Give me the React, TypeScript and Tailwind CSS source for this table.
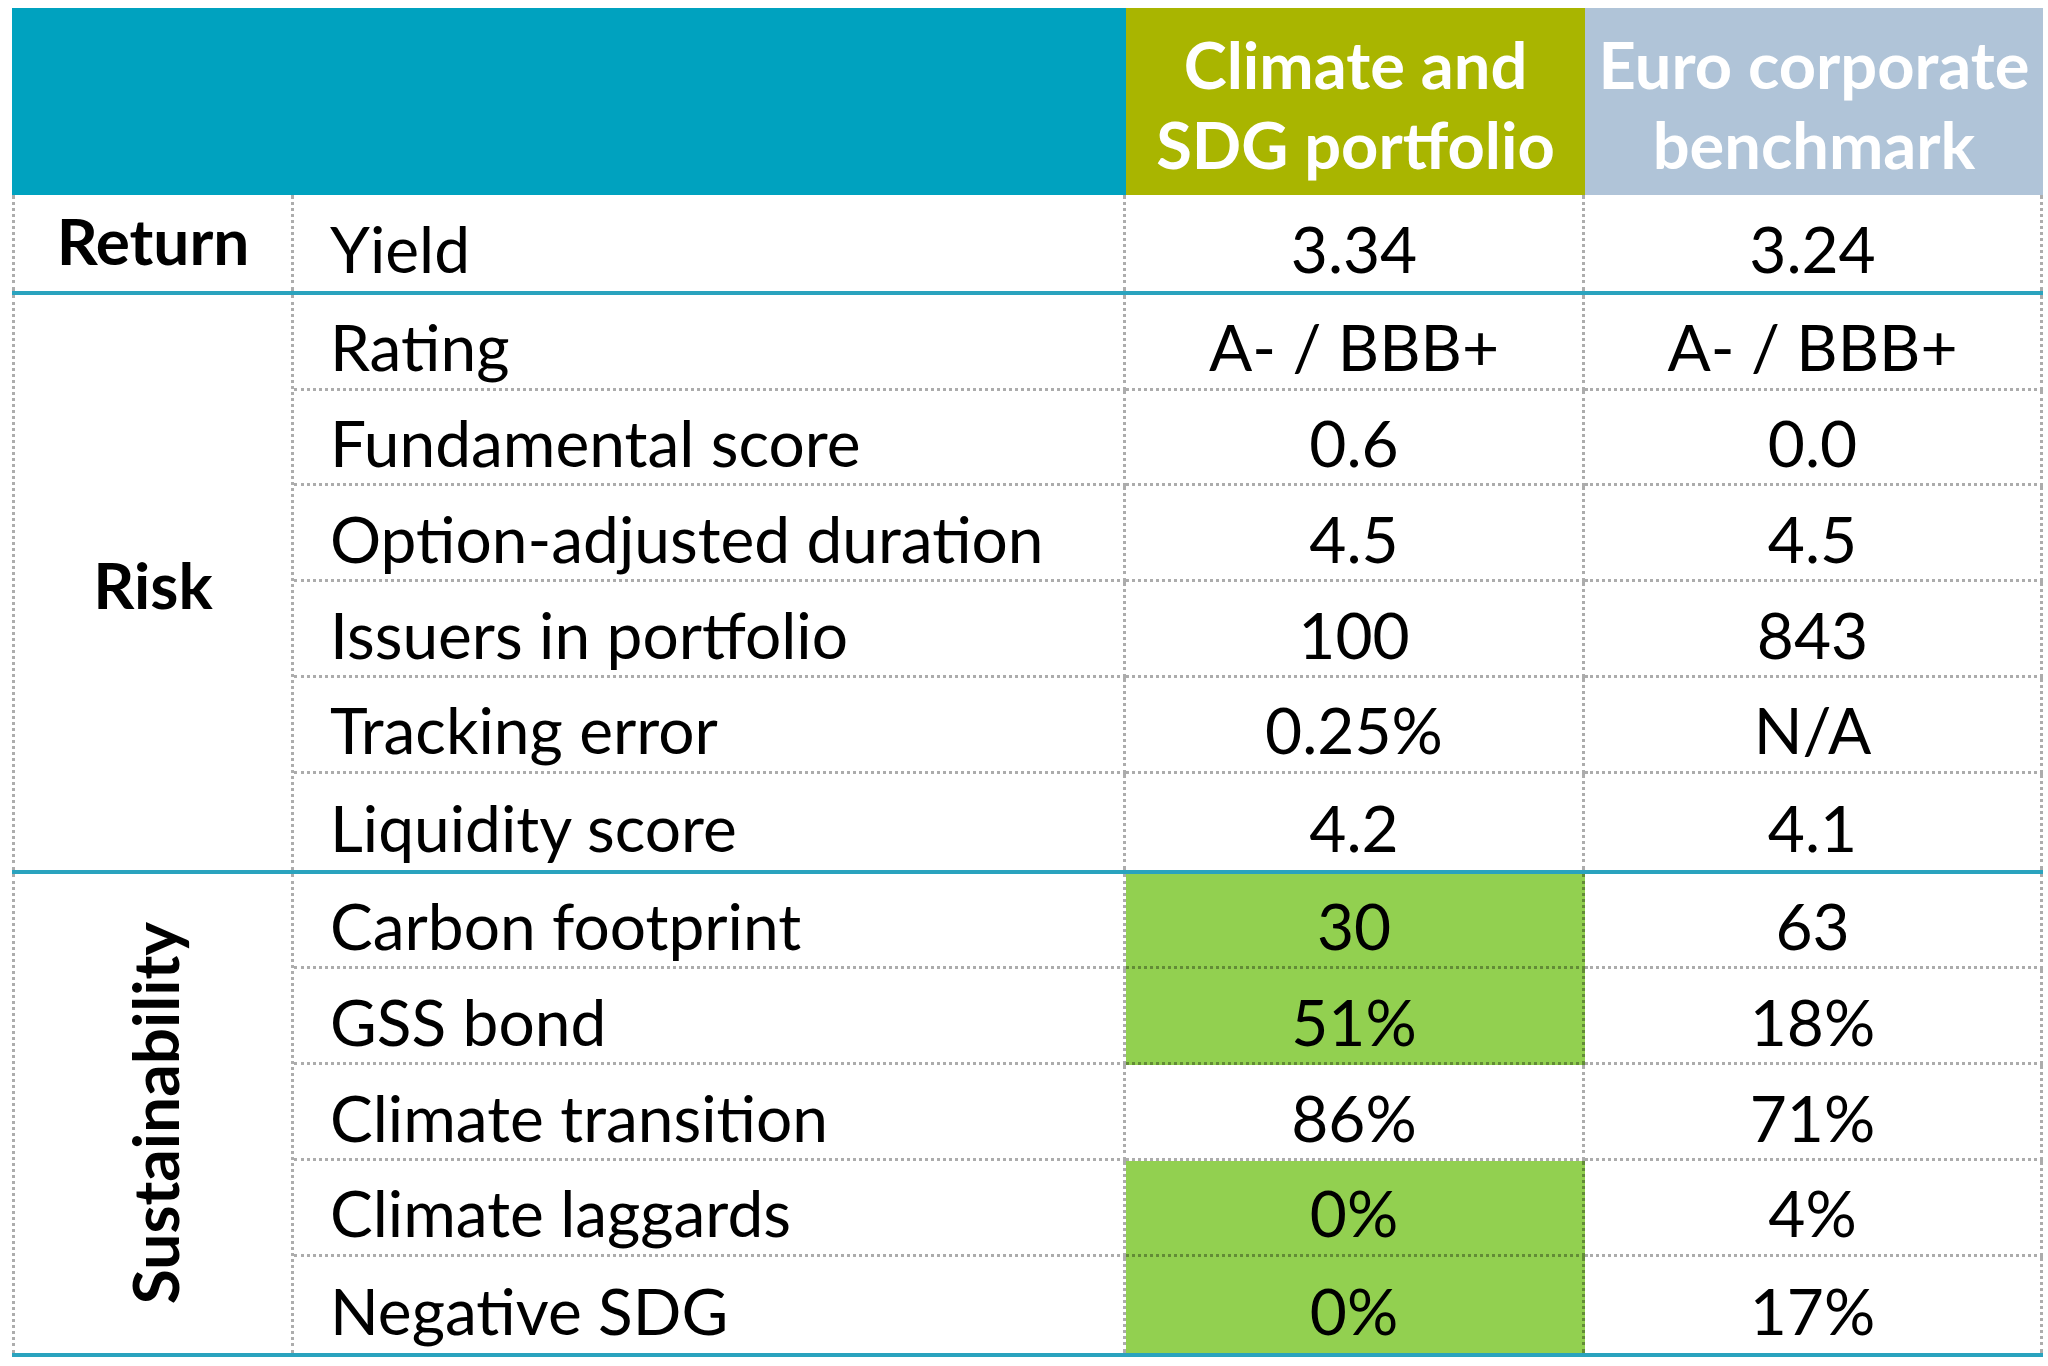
const dot = "border-dotted border-[rgba(0,0,0,0.32)]";

type Row = { label: string; a: string; b: string; hi?: boolean };

const sections: { name: string; vertical?: boolean; rows: Row[] }[] = [
  { name: "Return", rows: [{ label: "Yield", a: "3.34", b: "3.24" }] },
  {
    name: "Risk",
    rows: [
      { label: "Rating", a: "A- / BBB+", b: "A- / BBB+" },
      { label: "Fundamental score", a: "0.6", b: "0.0" },
      { label: "Option-adjusted duration", a: "4.5", b: "4.5" },
      { label: "Issuers in portfolio", a: "100", b: "843" },
      { label: "Tracking error", a: "0.25%", b: "N/A" },
      { label: "Liquidity score", a: "4.2", b: "4.1" },
    ],
  },
  {
    name: "Sustainability",
    vertical: true,
    rows: [
      { label: "Carbon footprint", a: "30", b: "63", hi: true },
      { label: "GSS bond", a: "51%", b: "18%", hi: true },
      { label: "Climate transition", a: "86%", b: "71%" },
      { label: "Climate laggards", a: "0%", b: "4%", hi: true },
      { label: "Negative SDG", a: "0%", b: "17%", hi: true },
    ],
  },
];

function DataRow({ row, last }: { row: Row; last: boolean }) {
  const bottom = last ? "" : `border-b-[3px] ${dot}`;
  return (
    <div className="grid h-[95.8px] grid-cols-[832px_459px_458px]">
      <div className={`flex items-center pl-[36px] pt-[13px] border-r-[3px] ${dot} ${bottom}`}>{row.label}</div>
      <div className={`flex items-center justify-center pt-[13px] border-r-[3px] ${dot} ${bottom} ${row.hi ? "bg-[#92d050]" : ""}`}>
        {row.a}
      </div>
      <div className={`flex items-center justify-center pt-[13px] border-r-[3px] ${dot} ${bottom}`}>{row.b}</div>
    </div>
  );
}

export default function App() {
  return (
    <div className="min-h-screen bg-white pl-[12px] pt-[8px] text-[64px] leading-[1.2] text-black [font-family:Lato,'Open_Sans',sans-serif]">
      <div className="w-[2031px]">
        {/* Header */}
        <div className="grid h-[187px] grid-cols-[1114px_459px_458px] font-bold text-white text-[65px] leading-[80px]">
          <div className="bg-[#00a2bf]" />
          <div className="flex items-center justify-center bg-[#a9b500] pt-[4px] text-center">
            Climate and
            <br />
            SDG portfolio
          </div>
          <div className="flex items-center justify-center bg-[#b0c4d8] pt-[4px] text-center">
            Euro corporate
            <br />
            benchmark
          </div>
        </div>

        {sections.map((s) => (
          <div key={s.name} className="flex border-b-4 border-[#2aa3be]">
            <div className={`flex w-[282px] shrink-0 items-center justify-center border-x-[3px] ${dot} font-bold`}>
              {s.vertical ? (
                <span className="ml-[4px] rotate-180 [writing-mode:vertical-rl]">{s.name}</span>
              ) : (
                <span className={s.name === "Return" ? "-mt-[4px]" : "pt-[6px]"}>{s.name}</span>
              )}
            </div>
            <div className="flex flex-1 flex-col">
              {s.rows.map((r, i) => (
                <DataRow key={r.label} row={r} last={i === s.rows.length - 1} />
              ))}
            </div>
          </div>
        ))}
      </div>
    </div>
  );
}
